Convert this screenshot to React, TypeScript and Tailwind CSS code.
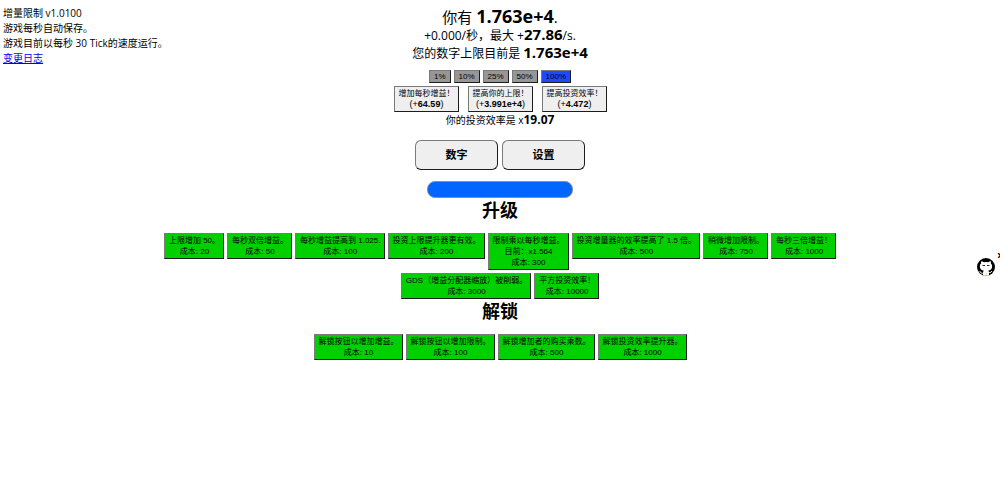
import React from "react";

type Upgrade = { lines: string[]; cost: number };

const upgrades: Upgrade[] = [
  { lines: ["上限增加 50。"], cost: 20 },
  { lines: ["每秒双倍增益。"], cost: 50 },
  { lines: ["每秒增益提高到 1.025."], cost: 100 },
  { lines: ["投资上限提升器更有效。"], cost: 200 },
  { lines: ["限制乘以每秒增益。", "目前：x1.564"], cost: 300 },
  { lines: ["投资增量器的效率提高了 1.5 倍。"], cost: 500 },
  { lines: ["稍微增加限制。"], cost: 750 },
  { lines: ["每秒三倍增益！"], cost: 1000 },
  { lines: ["GDS（增益分配器缩放）被削弱。"], cost: 3000 },
  { lines: ["平方投资效率！"], cost: 10000 },
];

const unlocks: Upgrade[] = [
  { lines: ["解锁按钮以增加增益。"], cost: 10 },
  { lines: ["解锁按钮以增加限制。"], cost: 100 },
  { lines: ["解锁增加者的购买乘数。"], cost: 500 },
  { lines: ["解锁投资效率提升器。"], cost: 1000 },
];

const investments = [
  { label: "增加每秒增益！", amount: "64.59" },
  { label: "提高你的上限！", amount: "3.991e+4" },
  { label: "提高投资效率！", amount: "4.472" },
];

const shares = ["1%", "10%", "25%", "50%", "100%"];

const bevel =
  "border border-t-[#7a7a7a] border-l-[#7a7a7a] border-r-[#1c1c1c] border-b-[#1c1c1c] font-['Liberation_Sans','Noto_Sans_CJK_SC',sans-serif] text-[8px] leading-[11px] whitespace-nowrap";

function UpgradeList({ items }: { items: Upgrade[] }) {
  return (
    <div className="flex flex-wrap items-start justify-center gap-[3px] px-40">
      {items.map((item) => (
        <button key={item.lines[0]} className={`${bevel} bg-[#00d000] py-px pr-[3px] pl-1`}>
          {item.lines.map((line) => (
            <span key={line} className="block">
              {line}
            </span>
          ))}
          <span className="block">成本: {item.cost}</span>
        </button>
      ))}
    </div>
  );
}

export default function App() {
  return (
    <div className="relative min-h-screen bg-white font-['Open_Sans','Noto_Sans_CJK_SC',sans-serif] text-black">
      <aside className="absolute top-[6px] left-[3px] text-[10px] leading-[15px]">
        <p>增量限制 v1.0100</p>
        <p>游戏每秒自动保存。</p>
        <p>游戏目前以每秒 30 Tick的速度运行。</p>
        <a href="#changelog" className="text-[#0000ee] underline">
          变更日志
        </a>
      </aside>

      <main className="flex flex-col items-center pt-[7px] text-center">
        <p className="text-[15px] leading-[20px]">
          你有 <b className="text-[18px] leading-none">1.763e+4</b>.
        </p>
        <p className="text-[12px] leading-[18px]">
          +0.000/秒，最大 +<b className="text-[15px] leading-none">27.86</b>/s.
        </p>
        <p className="text-[12px] leading-[18px]">
          您的数字上限目前是 <b className="text-[15px] leading-none">1.763e+4</b>
        </p>

        <div className="mt-[7px] flex gap-[3px]">
          {shares.map((share) => (
            <button
              key={share}
              className={`${bevel} px-1 ${share === "100%" ? "bg-[#2048ff]" : "bg-[#969696]"}`}
            >
              {share}
            </button>
          ))}
        </div>

        <div className="mt-[3px] flex gap-[9px]">
          {investments.map((item) => (
            <button key={item.label} className={`${bevel} bg-[#efefef] py-px pr-[3px] pl-1`}>
              <span className="block">{item.label}</span>
              <span className="block text-[9px]">
                (+<b>{item.amount}</b>)
              </span>
            </button>
          ))}
        </div>
        <p className="text-[10px] leading-[17px]">
          你的投资效率是 x<b className="text-[12px] leading-none">19.07</b>
        </p>

        <nav className="mt-[11px] flex gap-1">
          {["数字", "设置"].map((tab) => (
            <button
              key={tab}
              className="h-[30px] w-[83px] rounded-md border border-t-[#7a7a7a] border-r-[#1c1c1c] border-b-[#1c1c1c] border-l-[#7a7a7a] bg-[#efefef] text-[11px] font-bold"
            >
              {tab}
            </button>
          ))}
        </nav>

        <div className="mt-[11px] h-[17px] w-[146px] rounded-lg border border-[#8a8f98] bg-[#0066ff]" />

        <h2 className="text-[18px] leading-[25px] font-bold">升级</h2>
        <div className="mt-[10px] w-full">
          <UpgradeList items={upgrades} />
        </div>
        <h2 className="text-[18px] leading-[25px] font-bold">解锁</h2>
        <div className="mt-[10px] w-full">
          <UpgradeList items={unlocks} />
        </div>
      </main>

      <div className="absolute top-[250px] right-0 h-7 w-6 overflow-hidden">
        <a href="#github" aria-label="GitHub" className="absolute top-2 left-px block">
          <svg width="18" height="18" viewBox="0 0 18 18">
            <circle cx="9" cy="9" r="9" fill="#000" />
            <path
              d="M4.3 3.2C5.3 3.2 6.1 3.700 6.8 4.200A9 9 0 0 1 11.2 4.200C11.900 3.700 12.700 3.200 13.700 3.200C14.100 4.200 14 4.900 13.800 5.500C14.700 6.300 15.100 7.200 15.100 8.400C15.100 11.200 13.400 12.200 11.300 12.500C11.800 13 12 13.700 12 14.500V17.300C10 18 8 18 6 17.300V15.600C4.200 16 3.500 15 3.100 14.200C2.800 13.600 2.400 13.300 2 13C3.200 12.700 3.800 13.700 4.200 14.300C4.700 15 5.400 15 6 14.800C6.100 13.700 6.400 12.900 6.700 12.500C4.600 12.200 2.900 11.200 2.900 8.400C2.900 7.200 3.300 6.300 4.200 5.500C4 4.900 3.900 4.200 4.300 3.200z"
              fill="#fff"
            />
            <path d="M5.5 7.500H8M10 7.500h2.500" stroke="#222" strokeWidth="1" />
            <path d="M12.200 14.500q2.200.3 2.800-1.500" fill="none" stroke="#fff" strokeWidth="1" />
            <circle cx="9.5" cy="16" r="1" fill="#f3dc9a" />
          </svg>
        </a>
        <button aria-label="关闭" className="absolute top-0 left-[21px] text-[12px] leading-3 font-bold">
          ×
        </button>
      </div>
    </div>
  );
}
